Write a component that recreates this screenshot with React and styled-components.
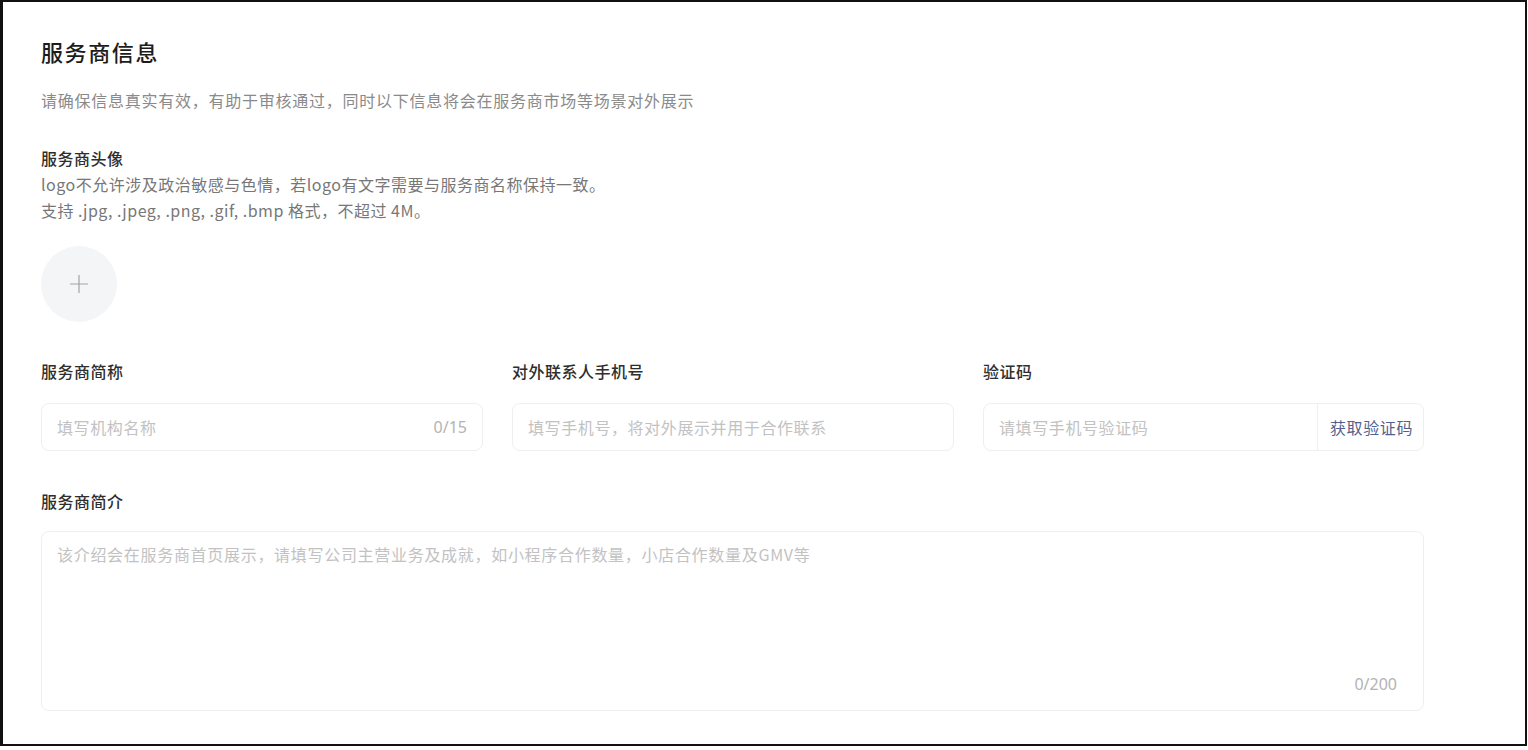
import React from "react";
import styled, { createGlobalStyle } from "styled-components";

const GlobalStyle = createGlobalStyle`
  html, body {
    margin: 0;
    padding: 0;
    background: #fff;
  }
  body {
    font-family: "Noto Sans CJK SC", "Noto Sans", sans-serif;
    -webkit-font-smoothing: antialiased;
  }
  * {
    box-sizing: border-box;
  }
`;

const Frame = styled.section`
  width: 1527px;
  height: 746px;
  border: 2px solid #111;
  border-left-width: 3px;
  padding: 35px 0 0 38px;
`;

const Form = styled.div`
  width: 1383px;
  display: flex;
  flex-direction: column;
`;

const Title = styled.h1`
  margin: 0;
  font-size: 22px;
  line-height: 28px;
  letter-spacing: 1.6px;
  font-weight: 500;
  color: #1c1c1c;
`;

const Subtitle = styled.p`
  margin: 24px 0 0;
  font-size: 16px;
  line-height: 22px;
  letter-spacing: 0.75px;
  color: #8a8a8a;
`;

const AvatarBlock = styled.div`
  margin-top: 34px;
  display: flex;
  flex-direction: column;
`;

const Label = styled.div`
  font-size: 16px;
  line-height: ${(p) => (p.$tight ? "26px" : "22px")};
  letter-spacing: 0.5px;
  font-weight: 500;
  color: #2e2e2e;
`;

const Hint = styled.div`
  font-size: 16px;
  line-height: 26px;
  letter-spacing: 0.5px;
  color: #777;
`;

const Upload = styled.button`
  margin-top: 23px;
  width: 76px;
  height: 76px;
  border-radius: 50%;
  border: none;
  background: #f4f5f7;
  display: grid;
  place-items: center;
  padding: 0;
  cursor: pointer;
`;

const Row = styled.div`
  margin-top: 38px;
  display: grid;
  grid-template-columns: 442px 442px 441px;
  column-gap: 29px;
`;

const Field = styled.div`
  display: flex;
  flex-direction: column;
  gap: 21px;
`;

const InputBox = styled.div`
  height: 48px;
  border: 1px solid #efefef;
  border-radius: 8px;
  display: flex;
  align-items: center;
  overflow: hidden;
`;

const Input = styled.input`
  flex: 1;
  min-width: 0;
  height: 100%;
  border: none;
  outline: none;
  padding: 0 0 0 15px;
  font-family: inherit;
  font-size: 16px;
  letter-spacing: 0.6px;
  color: #333;
  background: transparent;
  &::placeholder {
    color: #c2c2c2;
  }
`;

const Counter = styled.span`
  font-size: 16px;
  color: #b3b3b3;
  padding-right: ${(p) => p.$pad || "15px"};
  font-family: "Noto Sans", "Noto Sans CJK SC", sans-serif;
`;

const CodeButton = styled.button`
  height: 100%;
  border: none;
  border-left: 1px solid #efefef;
  background: transparent;
  padding: 0 10px 0 12px;
  font-family: inherit;
  font-size: 16px;
  letter-spacing: 0.6px;
  color: #52628f;
  cursor: pointer;
`;

const IntroField = styled(Field)`
  margin-top: 39px;
  gap: 19px;
`;

const AreaBox = styled.div`
  height: 180px;
  border: 1px solid #efefef;
  border-radius: 8px;
  display: flex;
  flex-direction: column;
  padding: 10px 0 15px;
`;

const TextArea = styled.textarea`
  flex: 1;
  border: none;
  outline: none;
  resize: none;
  padding: 0 15px;
  font-family: inherit;
  font-size: 16px;
  line-height: 24px;
  letter-spacing: 0.7px;
  color: #333;
  &::placeholder {
    color: #c2c2c2;
  }
`;

const AreaFooter = styled.div`
  display: flex;
  justify-content: flex-end;
`;

const Plus = () => (
  <svg width="20" height="20" viewBox="0 0 20 20" fill="none">
    <path d="M10 1v18M1 10h18" stroke="#a3a3a3" strokeWidth="1.2" />
  </svg>
);

export default function App() {
  return (
    <>
      <GlobalStyle />
      <Frame>
        <Form>
          <Title>服务商信息</Title>
          <Subtitle>请确保信息真实有效，有助于审核通过，同时以下信息将会在服务商市场等场景对外展示</Subtitle>

          <AvatarBlock>
            <Label $tight>服务商头像</Label>
            <Hint>logo不允许涉及政治敏感与色情，若logo有文字需要与服务商名称保持一致。</Hint>
            <Hint>支持 .jpg, .jpeg, .png, .gif, .bmp 格式，不超过 4M。</Hint>
            <Upload aria-label="上传头像">
              <Plus />
            </Upload>
          </AvatarBlock>

          <Row>
            <Field>
              <Label>服务商简称</Label>
              <InputBox>
                <Input placeholder="填写机构名称" />
                <Counter>0/15</Counter>
              </InputBox>
            </Field>
            <Field>
              <Label>对外联系人手机号</Label>
              <InputBox>
                <Input placeholder="填写手机号，将对外展示并用于合作联系" />
              </InputBox>
            </Field>
            <Field>
              <Label>验证码</Label>
              <InputBox>
                <Input placeholder="请填写手机号验证码" />
                <CodeButton>获取验证码</CodeButton>
              </InputBox>
            </Field>
          </Row>

          <IntroField>
            <Label>服务商简介</Label>
            <AreaBox>
              <TextArea placeholder="该介绍会在服务商首页展示，请填写公司主营业务及成就，如小程序合作数量，小店合作数量及GMV等" />
              <AreaFooter>
                <Counter $pad="26px">0/200</Counter>
              </AreaFooter>
            </AreaBox>
          </IntroField>
        </Form>
      </Frame>
    </>
  );
}
